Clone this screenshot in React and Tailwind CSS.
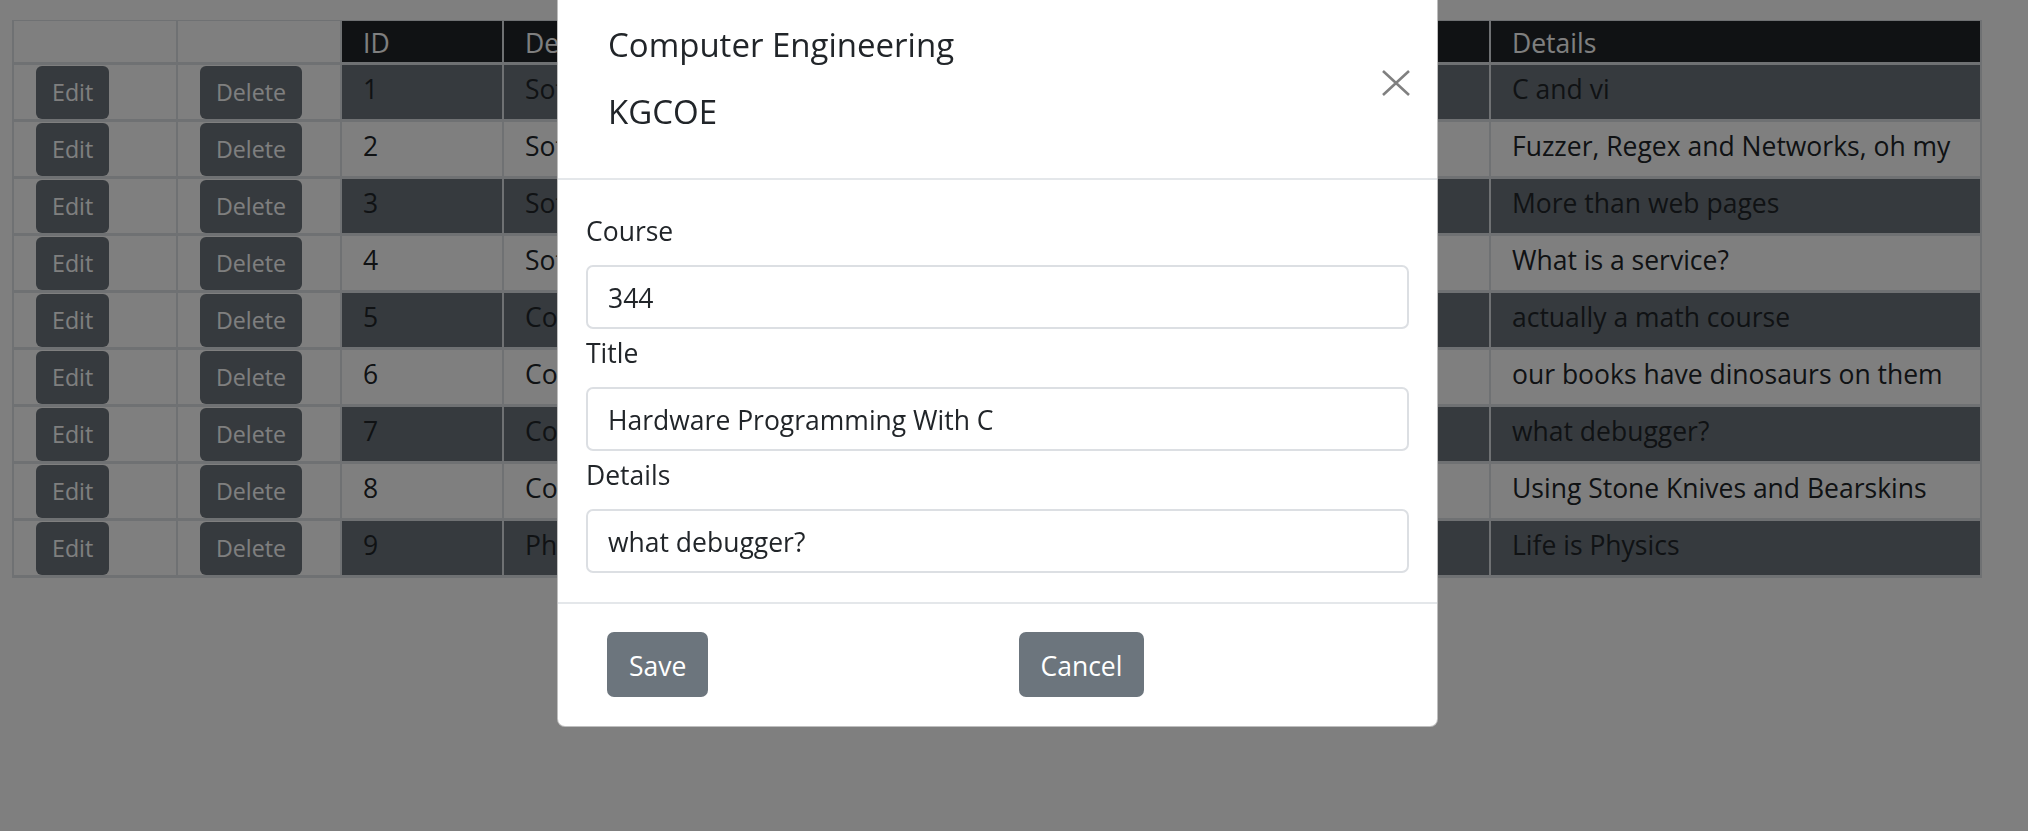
import React from "react";
import clsx from "clsx";

const columns = [
  { key: "edit", label: "", width: "w-[164px]", dark: false },
  { key: "delete", label: "", width: "w-[164px]", dark: false },
  { key: "id", label: "ID", width: "w-[162px]", dark: true },
  { key: "dept", label: "Department", width: "w-[330px]", dark: true },
  { key: "course", label: "Course", width: "w-[150px]", dark: true },
  { key: "title", label: "Title", width: "w-[507px]", dark: true },
  { key: "details", label: "Details", width: "w-[491px]", dark: true },
];

const courses = [
  { id: 1, dept: "Software Engineering", course: "261", title: "Intro to Software Eng", details: "C and vi" },
  { id: 2, dept: "Software Engineering", course: "262", title: "Secure Software", details: "Fuzzer, Regex and Networks, oh my" },
  { id: 3, dept: "Software Engineering", course: "440", title: "Web Engineering", details: "More than web pages" },
  { id: 4, dept: "Software Engineering", course: "422", title: "Service Design", details: "What is a service?" },
  { id: 5, dept: "Computer Engineering", course: "250", title: "Digital Logic", details: "actually a math course" },
  { id: 6, dept: "Computer Engineering", course: "251", title: "Operating Systems", details: "our books have dinosaurs on them" },
  { id: 7, dept: "Computer Engineering", course: "344", title: "Hardware Programming", details: "what debugger?" },
  { id: 8, dept: "Computer Engineering", course: "361", title: "Legacy Systems", details: "Using Stone Knives and Bearskins" },
  { id: 9, dept: "Physics", course: "211", title: "University Physics", details: "Life is Physics" },
];

function SmallButton({ children }) {
  return (
    <button className="mt-[1px] h-[53px] px-[16px] rounded-[6px] bg-[#6c757d] text-white text-[23.2px] leading-[53px]">
      {children}
    </button>
  );
}

function CourseTable() {
  return (
    <div className="ml-[12px] pt-[20px]">
      <div className="w-[1970px] border-l-2 border-t border-[#dee2e6]">
        {/* header */}
        <div className="flex h-[44px] border-b-[3px] border-[#dee2e6]">
          {columns.map((col) => (
            <div
              key={col.key}
              className={clsx(
                "shrink-0 border-r-2 border-[#dee2e6] pl-[21px] pt-[2px] leading-[40px] whitespace-nowrap overflow-hidden",
                col.width,
                col.dark && "bg-[#212529] text-white"
              )}
            >
              {col.label}
            </div>
          ))}
        </div>

        {/* rows */}
        {courses.map((row, i) => (
          <div key={row.id} className="flex h-[57px] border-b-[3px] border-[#dee2e6]">
            {columns.map((col) => {
              const striped = i % 2 === 0 && col.dark;
              return (
                <div
                  key={col.key}
                  className={clsx(
                    "shrink-0 border-r-2 border-[#dee2e6] whitespace-nowrap overflow-hidden",
                    col.width,
                    col.dark ? "pl-[21px] pt-[4px] leading-[40px]" : "pl-[22px]",
                    striped && "bg-[#6c757d]"
                  )}
                >
                  {col.key === "edit" && <SmallButton>Edit</SmallButton>}
                  {col.key === "delete" && <SmallButton>Delete</SmallButton>}
                  {col.dark && row[col.key]}
                </div>
              );
            })}
          </div>
        ))}
      </div>
    </div>
  );
}

function Field({ label, value }) {
  return (
    <div>
      <label className="block mt-[4px] mb-[14px] leading-[40px]">{label}</label>
      <input
        readOnly
        defaultValue={value}
        className="block w-full h-[64px] px-[20px] pt-[2px] border-2 border-[#dcdfe3] rounded-[7px] bg-white text-[#212529] text-[26.5px] outline-none"
      />
    </div>
  );
}

function FooterButton({ children }) {
  return (
    <button className="h-[65px] px-[22px] pt-[4px] rounded-[7px] bg-[#6c757d] text-white leading-[61px]">
      {children}
    </button>
  );
}

function EditModal() {
  return (
    <div className="absolute left-[557px] top-0 w-[881px] bg-white border-x border-b border-black/25 rounded-b-[8px]">
      {/* header */}
      <div className="flex justify-between h-[180px] border-b-2 border-[#e4e7ea]">
        <div className="pl-[50px] pt-[25px] text-[33px]">
          <div className="leading-[40px]">Computer Engineering</div>
          <div className="mt-[27px] leading-[40px]">KGCOE</div>
        </div>
        <button className="mt-[70px] mr-[27px] h-[26px]">
          <svg width="28" height="26" viewBox="0 0 28 26">
            <path d="M1 1 L27 25 M27 1 L1 25" stroke="#808080" strokeWidth="2.6" fill="none" />
          </svg>
        </button>
      </div>

      {/* body */}
      <div className="px-[28px] pt-[27px] pb-[29px]">
        <Field label="Course" value="344" />
        <Field label="Title" value="Hardware Programming With C" />
        <Field label="Details" value="what debugger?" />
      </div>

      {/* footer */}
      <div className="grid grid-cols-2 px-[28px] pt-[28px] pb-[29px] border-t-2 border-[#e4e7ea]">
        <div className="pl-[21px]">
          <FooterButton>Save</FooterButton>
        </div>
        <div className="pl-[21px]">
          <FooterButton>Cancel</FooterButton>
        </div>
      </div>
    </div>
  );
}

export default function App() {
  return (
    <div
      className="relative w-full h-screen overflow-hidden bg-white text-[#212529] text-[26.5px]"
      style={{ fontFamily: '"Open Sans", "Noto Sans", sans-serif' }}
    >
      <CourseTable />

      {/* backdrop + dialog */}
      <div className="fixed inset-0 bg-black/50" />
      <EditModal />
    </div>
  );
}
